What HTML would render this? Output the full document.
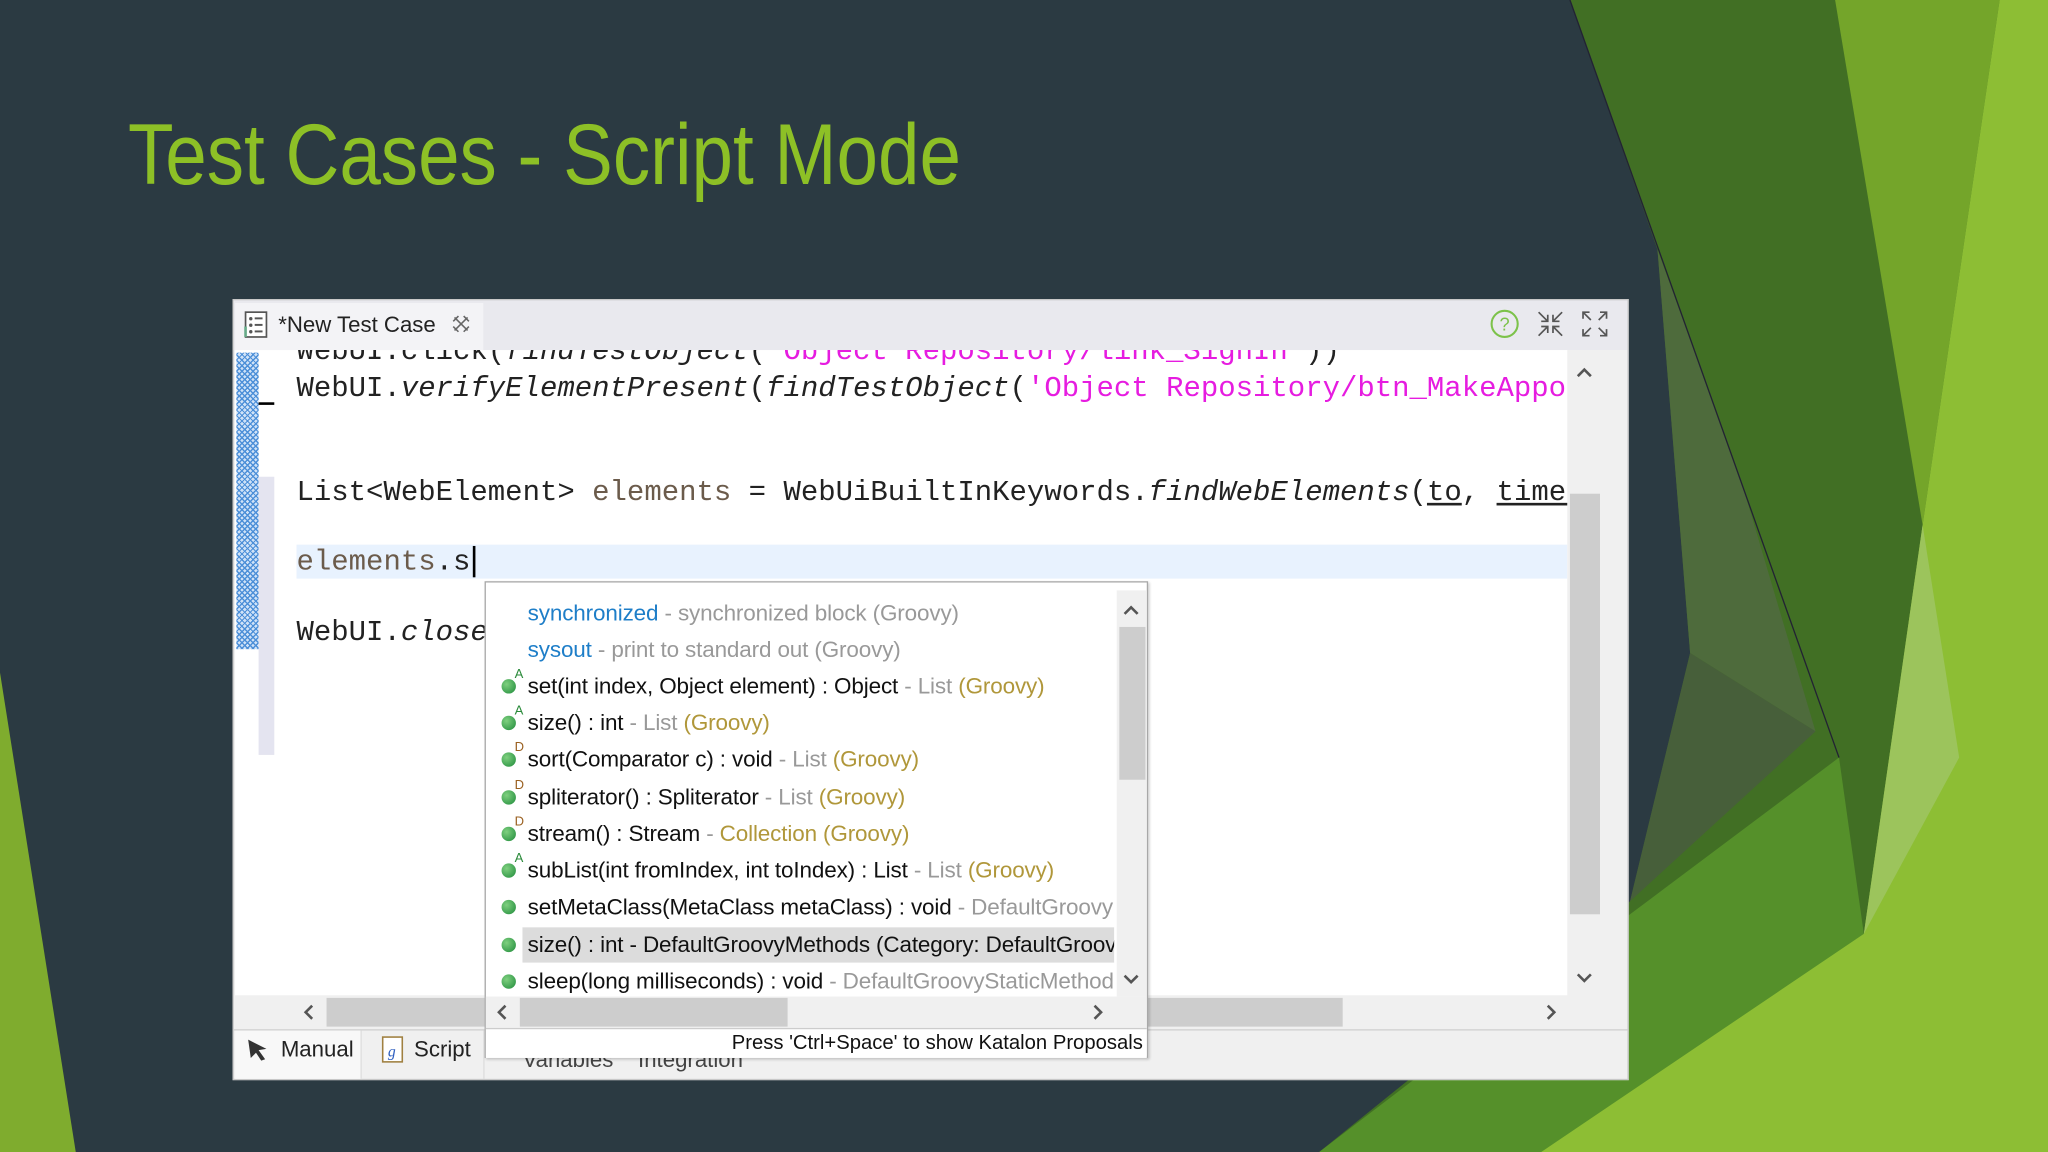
<!DOCTYPE html>
<html><head><meta charset="utf-8"><style>
html,body{margin:0;padding:0;width:2048px;height:1152px;overflow:hidden;background:#2b3a42}
#s{position:absolute;left:0;top:0;width:1568px;height:882px;transform:scale(1.306122);transform-origin:0 0;font-family:"Liberation Sans",sans-serif}
.a{position:absolute}
.code{position:absolute;font-family:"Liberation Mono",monospace;font-size:22.2px;line-height:26px;height:26px;white-space:pre;color:#222}
.str{color:#e61ce0}
.var{color:#6b5b4b}
.it{font-style:italic}
.u{text-decoration:underline}
.pi{position:absolute;left:404px;font-size:17.2px;line-height:26px;height:26px;white-space:nowrap;color:#111;letter-spacing:-0.1px}
.pi .g{color:#999}
.pi .o{color:#b0973a}
.pi .b{color:#1e7ec8}
.dot{position:absolute;left:384px;width:11px;height:11px;border-radius:50%;background:radial-gradient(circle at 35% 35%,#7fd07f,#1e8a3a)}
.sup{position:absolute;left:394px;font-size:10px;line-height:10px}
</style></head><body><div id="s">
<svg class="a" style="left:0;top:0" width="1568" height="882">
<polygon points="1202,0 1568,0 1568,882 1010,882 1248,690 1294,500 1269,191" fill="#416f24"/>
<polygon points="1269,191 1333,368 1390,560 1294,500" fill="#4e6b3c"/>
<polygon points="1294,500 1390,560 1248,690" fill="#475f3a"/>
<polygon points="1010,882 1248,700 1408,580 1427,715 1380,882" fill="#55902a"/>
<polygon points="1405,0 1531,0 1472,402" fill="#74a52a"/>
<polygon points="1531,0 1568,0 1568,882 1180,882 1427,715 1472,402" fill="#8dbe34"/>
<polygon points="1472,402 1500,580 1427,715" fill="#9cc45c"/>
<line x1="1202" y1="0" x2="1408" y2="580" stroke="#223" stroke-width="1"/>
<polygon points="0,515 0,882 58,882" fill="#7fac2e"/>
</svg>
<div class="a" style="left:98px;top:80px;font-size:66px;color:#8dc026;white-space:nowrap;transform:scaleX(0.865);transform-origin:0 0">Test Cases - Script Mode</div>

<div class="a" style="left:178px;top:229px;width:1069px;height:598px;background:#f0f0f0;border:1px solid #c8c8c8;box-sizing:border-box"></div>
<div class="a" style="left:179px;top:230px;width:1067px;height:38px;background:#e9e9ee"></div>
<div class="a" style="left:180px;top:232px;width:190px;height:36px;background:#f3f3f6"></div>
<svg class="a" style="left:186px;top:238px" width="22" height="22"><rect x="2" y="1" width="16" height="19" fill="#fff" stroke="#555" stroke-width="1.3"/><g fill="#555"><circle cx="6" cy="6" r="1.3"/><circle cx="6" cy="11" r="1.3"/><circle cx="6" cy="16" r="1.3"/><rect x="9" y="5" width="6" height="1.5"/><rect x="9" y="10" width="6" height="1.5"/><rect x="9" y="15" width="6" height="1.5"/></g><rect x="1" y="12" width="2" height="8" fill="#6a8"/></svg>
<div class="a" style="left:213px;top:238px;font-size:17px;line-height:22px;color:#222">*New Test Case</div>
<svg class="a" style="left:345px;top:240px" width="16" height="16"><path d="M3 3 L13 13 M13 3 L3 13 M2 6 L6 2 M10 2 L14 6 M2 10 L6 14 M10 14 L14 10" stroke="#666" stroke-width="1.2" fill="none"/></svg>
<svg class="a" style="left:1140px;top:236px" width="24" height="24"><circle cx="12" cy="12" r="10" fill="none" stroke="#7cc24a" stroke-width="1.6"/><text x="12" y="17" font-size="14" text-anchor="middle" fill="#7cc24a" font-family="Liberation Sans">?</text></svg>
<svg class="a" style="left:1175px;top:236px" width="24" height="24"><path d="M3 3 L10 10 M10 5 V10 H5 M21 3 L14 10 M14 5 V10 H19 M3 21 L10 14 M10 19 V14 H5 M21 21 L14 14 M14 19 V14 H19" stroke="#555" stroke-width="1.3" fill="none"/></svg>
<svg class="a" style="left:1209px;top:236px" width="24" height="24"><path d="M3 3 L9 9 M3 8 V3 H8 M21 3 L15 9 M21 8 V3 H16 M3 21 L9 15 M3 16 V21 H8 M21 21 L15 15 M21 16 V21 H16" stroke="#555" stroke-width="1.3" fill="none"/></svg>

<div class="a" style="left:180px;top:268px;width:1020px;height:494px;background:#fff;overflow:hidden">
<div class="a" style="left:1px;top:2px;width:17px;height:227px;background-color:#cfe2f7;background-image:repeating-linear-gradient(45deg,#4c8fd8 0 1px,transparent 1px 3px),repeating-linear-gradient(-45deg,#4c8fd8 0 1px,transparent 1px 3px)"></div>
<div class="a" style="left:18px;top:97px;width:12px;height:213px;background:#e4e4f0"></div>
<div class="a" style="left:18px;top:40px;width:12px;height:2px;background:#000"></div>
<div class="a" style="left:47px;top:149px;width:973px;height:26px;background:#e8f2fe"></div>
<div class="code" style="left:47px;top:-11px">WebUI.click(<span class="it">findTestObject</span>(<span class="str">'Object Repository/link_SignIn'</span>))</div>
<div class="code" style="left:47px;top:17px">WebUI.<span class="it">verifyElementPresent</span>(<span class="it">findTestObject</span>(<span class="str">'Object Repository/btn_MakeAppointment'</span>), 2)</div>
<div class="code" style="left:47px;top:97px">List&lt;WebElement&gt; <span class="var">elements</span> = WebUiBuiltInKeywords.<span class="it">findWebElements</span>(<span class="u">to</span>, <span class="u">timeout</span>)</div>
<div class="code" style="left:47px;top:150px"><span class="var">elements</span>.s</div>
<div class="a" style="left:182px;top:150px;width:2px;height:24px;background:#000"></div>
<div class="code" style="left:47px;top:204px">WebUI.<span class="it">close</span>Browser()</div>
</div>
<div class="a" style="left:1200px;top:268px;width:26px;height:494px;background:#f0f0f0"></div>
<div class="a" style="left:1202px;top:378px;width:23px;height:322px;background:#cdcdcd"></div>
<svg class="a" style="left:1206px;top:744px" width="14" height="10"><path d="M2 2 L7 7 L12 2" stroke="#555" stroke-width="2" fill="none"/></svg>
<svg class="a" style="left:1206px;top:280px" width="14" height="10"><path d="M2 8 L7 3 L12 8" stroke="#555" stroke-width="2" fill="none"/></svg>
<div class="a" style="left:200px;top:763px;width:1000px;height:24px;background:#f0f0f0"></div>
<div class="a" style="left:250px;top:764px;width:778px;height:22px;background:#cdcdcd"></div>
<svg class="a" style="left:231px;top:768px" width="10" height="14"><path d="M8 2 L3 7 L8 12" stroke="#555" stroke-width="2" fill="none"/></svg>
<svg class="a" style="left:1183px;top:768px" width="10" height="14"><path d="M2 2 L7 7 L2 12" stroke="#555" stroke-width="2" fill="none"/></svg>
<div class="a" style="left:179px;top:788px;width:1067px;height:1px;background:#d0d0d0"></div>
<div class="a" style="left:180px;top:789px;width:96px;height:37px;background:#f8f8f8;border-right:1px solid #ddd"></div>
<svg class="a" style="left:188px;top:794px" width="20" height="20"><path d="M2 2 L16 9 L10 10 L15 17 L12 18 L8 12 L4 16 Z" fill="#333"/></svg>
<div class="a" style="left:215px;top:793px;font-size:17px;line-height:22px;color:#222">Manual</div>
<svg class="a" style="left:292px;top:793px" width="18" height="22"><rect x="1" y="1" width="15" height="19" fill="#fff" stroke="#a08040" stroke-width="1.2"/><text x="8" y="16" font-size="12" text-anchor="middle" fill="#3060c0" font-family="Liberation Serif" font-style="italic">g</text></svg>
<div class="a" style="left:317px;top:793px;font-size:17px;line-height:22px;color:#222">Script</div>
<div class="a" style="left:370px;top:789px;width:1px;height:37px;background:#ddd"></div>
<div class="a" style="left:400px;top:802px;font-size:17px;color:#444">Variables &nbsp;&nbsp; Integration</div>

<div class="a" style="left:371px;top:445px;width:508px;height:365px;background:#fff;border:1px solid #a8a8a8;box-sizing:border-box;box-shadow:1px 1px 2px rgba(0,0,0,.2)"></div>
<div class="a" style="left:400px;top:710px;width:453px;height:27px;background:#dcdcdc"></div>
<div class="pi" style="top:456px"><span class="b">synchronized</span><span class="g"> - synchronized block (Groovy)</span></div>
<div class="pi" style="top:484px"><span class="b">sysout</span><span class="g"> - print to standard out (Groovy)</span></div>
<div class="pi" style="top:512px">set(int index, Object element) : Object<span class="g"> - List </span><span class="o">(Groovy)</span></div>
<div class="pi" style="top:540px">size() : int<span class="g"> - List </span><span class="o">(Groovy)</span></div>
<div class="pi" style="top:568px">sort(Comparator c) : void<span class="g"> - List </span><span class="o">(Groovy)</span></div>
<div class="pi" style="top:597px">spliterator() : Spliterator<span class="g"> - List </span><span class="o">(Groovy)</span></div>
<div class="pi" style="top:625px">stream() : Stream<span class="g"> - </span><span class="o">Collection (Groovy)</span></div>
<div class="pi" style="top:653px">subList(int fromIndex, int toIndex) : List<span class="g"> - List </span><span class="o">(Groovy)</span></div>
<div class="a" style="left:400px;top:680px;width:453px;height:60px;overflow:hidden">
<div class="pi" style="left:4px;top:1px">setMetaClass(MetaClass metaClass) : void<span class="g"> - DefaultGroovyMethods</span></div>
<div class="pi" style="left:4px;top:30px">size() : int - DefaultGroovyMethods (Category: DefaultGroovyMethods)</div>
</div>
<div class="a" style="left:400px;top:738px;width:453px;height:26px;overflow:hidden"><div class="pi" style="left:4px;top:0">sleep(long milliseconds) : void<span class="g"> - DefaultGroovyStaticMethods</span></div></div>
<div class="dot" style="top:520px"></div><div class="sup" style="top:512px;color:#2a8a3a">A</div>
<div class="dot" style="top:548px"></div><div class="sup" style="top:540px;color:#2a8a3a">A</div>
<div class="dot" style="top:576px"></div><div class="sup" style="top:568px;color:#9a6020">D</div>
<div class="dot" style="top:605px"></div><div class="sup" style="top:597px;color:#9a6020">D</div>
<div class="dot" style="top:633px"></div><div class="sup" style="top:625px;color:#9a6020">D</div>
<div class="dot" style="top:661px"></div><div class="sup" style="top:653px;color:#2a8a3a">A</div>
<div class="dot" style="top:689px"></div>
<div class="dot" style="top:718px"></div>
<div class="dot" style="top:746px"></div>
<div class="a" style="left:855px;top:452px;width:23px;height:311px;background:#f0f0f0"></div>
<div class="a" style="left:857px;top:480px;width:20px;height:117px;background:#cdcdcd"></div>
<svg class="a" style="left:859px;top:462px" width="14" height="10"><path d="M2 8 L7 3 L12 8" stroke="#555" stroke-width="2" fill="none"/></svg>
<svg class="a" style="left:859px;top:745px" width="14" height="10"><path d="M2 2 L7 7 L12 2" stroke="#555" stroke-width="2" fill="none"/></svg>
<div class="a" style="left:372px;top:763px;width:506px;height:24px;background:#f0f0f0"></div>
<div class="a" style="left:398px;top:764px;width:205px;height:22px;background:#cdcdcd"></div>
<svg class="a" style="left:379px;top:768px" width="10" height="14"><path d="M8 2 L3 7 L8 12" stroke="#555" stroke-width="2" fill="none"/></svg>
<svg class="a" style="left:836px;top:768px" width="10" height="14"><path d="M2 2 L7 7 L2 12" stroke="#555" stroke-width="2" fill="none"/></svg>
<div class="a" style="left:372px;top:787px;width:506px;height:22px;background:#fff;border-top:1px solid #ccc"></div>
<div class="a" style="left:372px;top:789px;width:503px;text-align:right;font-size:15.5px;line-height:20px;color:#111">Press 'Ctrl+Space' to show Katalon Proposals</div>
</div></body></html>
